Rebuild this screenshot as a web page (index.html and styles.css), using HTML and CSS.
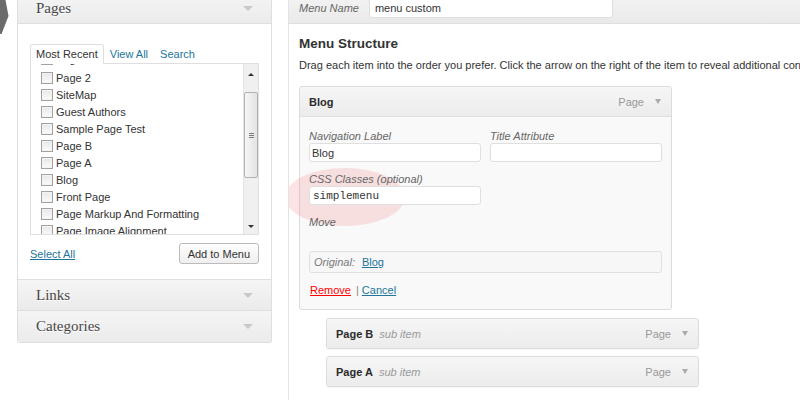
FILE: index.html
```html
<!DOCTYPE html>
<html lang="en">
<head>
<meta charset="utf-8">
<title>Menus</title>
<link rel="stylesheet" href="styles.css">
</head>
<body>
<svg class="pointer" width="10" height="40" viewBox="0 0 10 40"><polygon points="0,0 5.5,0 8.5,16 1.5,34 0,34" fill="#6b6b6b"/></svg>
<div class="page">
  <aside class="side">
    <div class="panel">
      <div class="acc-head"><h3 class="acc-title">Pages</h3><span class="acc-arrow"></span></div>
      <div class="acc-body">
        <div class="tabs">
          <span class="tab active">Most Recent</span>
          <a class="tab">View All</a>
          <a class="tab">Search</a>
        </div>
        <div class="checklist">
          <ul class="items">
            <li class="peek"><span class="cb"></span>Page with comments</li>
            <li><span class="cb"></span>Page 2</li>
            <li><span class="cb"></span>SiteMap</li>
            <li><span class="cb"></span>Guest Authors</li>
            <li><span class="cb"></span>Sample Page Test</li>
            <li><span class="cb"></span>Page B</li>
            <li><span class="cb"></span>Page A</li>
            <li><span class="cb"></span>Blog</li>
            <li><span class="cb"></span>Front Page</li>
            <li><span class="cb"></span>Page Markup And Formatting</li>
            <li><span class="cb"></span>Page Image Alignment</li>
          </ul>
          <div class="sb">
            <div class="sb-btn"><span class="up"></span></div>
            <div class="sb-track"><div class="thumb"><span class="grip"></span></div></div>
            <div class="sb-btn"><span class="down"></span></div>
          </div>
        </div>
        <div class="actions"><a class="select-all">Select All</a><button class="btn">Add to Menu</button></div>
      </div>
      <div class="acc-head"><h3 class="acc-title">Links</h3><span class="acc-arrow"></span></div>
      <div class="acc-head last"><h3 class="acc-title">Categories</h3><span class="acc-arrow"></span></div>
    </div>
  </aside>
  <main class="edit">
    <div class="edit-head"><label class="name-label">Menu Name</label><input class="name-input" type="text" value="menu custom"></div>
    <div class="edit-body">
      <h2 class="structure">Menu Structure</h2>
      <p class="hint">Drag each item into the order you prefer. Click the arrow on the right of the item to reveal additional configuration options.</p>
      <div class="menu">
        <div class="item open">
          <div class="item-bar"><span class="item-title">Blog</span><span class="item-type">Page</span><span class="caret"></span></div>
          <div class="item-settings">
            <span class="spot"></span>
            <div class="row">
              <div class="field"><span class="label">Navigation Label</span><input class="field-input" type="text" value="Blog"></div>
              <div class="field"><span class="label">Title Attribute</span><input class="field-input" type="text" value=""></div>
            </div>
            <div class="row">
              <div class="field"><span class="label">CSS Classes (optional)</span><input class="field-input mono" type="text" value="simplemenu"></div>
            </div>
            <div class="label move">Move</div>
            <div class="original"><span class="orig-label">Original:</span><a class="link">Blog</a></div>
            <div class="item-actions"><a class="remove">Remove</a><span class="sep">|</span><a class="link">Cancel</a></div>
          </div>
        </div>
        <div class="item sub">
          <div class="item-bar"><span class="item-title">Page B</span><span class="sub-note">sub item</span><span class="item-type">Page</span><span class="caret"></span></div>
        </div>
        <div class="item sub">
          <div class="item-bar"><span class="item-title">Page A</span><span class="sub-note">sub item</span><span class="item-type">Page</span><span class="caret"></span></div>
        </div>
      </div>
    </div>
  </main>
</div>
</body>
</html>
```

FILE: styles.css
```css
* { box-sizing: border-box; }
html, body { margin: 0; background: #fff; }
body {
  font-family: "Liberation Sans", Arial, sans-serif;
  font-size: 11px;
  color: #333;
  width: 800px;
  height: 400px;
  overflow: hidden;
  position: relative;
}
.pointer { position: absolute; left: 0; top: 0; z-index: 5; }

.page { display: flex; margin-top: -7px; height: 407px; }

/* left column */
.side { flex: none; width: 289px; border-right: 1px solid #e3e3e3; padding-left: 17px; }
.panel {
  width: 255px;
  border: 1px solid #dfdfdf;
  border-top: 0;
  border-radius: 0 0 3px 3px;
  overflow: hidden;
}
.acc-head {
  height: 31px;
  display: flex;
  align-items: center;
  justify-content: space-between;
  padding: 0 18px 0 18px;
  border-bottom: 1px solid #dfdfdf;
  background: linear-gradient(#f5f5f5, #ebebeb);
}
.acc-head.last { border-bottom: 0; }
.acc-title { margin: 0; font: 15px "Liberation Serif", "Times New Roman", serif; color: #464646; text-shadow: 0 1px 0 #fff; }
.acc-arrow { width: 0; height: 0; border-left: 5px solid transparent; border-right: 5px solid transparent; border-top: 5px solid #c9c9c9; }

.acc-body { background: #fff; padding: 20px 12px 15px; border-bottom: 1px solid #dfdfdf; }
.tabs { display: flex; height: 19px; }
.tab {
  font-size: 11px;
  line-height: 18px;
  padding: 0 5px;
  color: #21759b;
  text-decoration: none;
  border: 1px solid transparent;
  border-bottom: 0;
}
.tab.active {
  color: #333;
  background: #fff;
  border-color: #dfdfdf;
  border-radius: 3px 3px 0 0;
  height: 20px;
  position: relative;
  z-index: 1;
}
.checklist { display: flex; height: 172px; border: 1px solid #dfdfdf; background: #fff; overflow: hidden; }
.items { flex: 1; list-style: none; margin: -14px 0 0; padding: 0 0 0 10px; overflow: hidden; }
.items li { height: 17px; display: flex; align-items: center; gap: 3px; white-space: nowrap; color: #333; }
.items li.peek { margin-bottom: 2px; }
.cb {
  flex: none;
  width: 12px;
  height: 12px;
  border: 1px solid #a2a2a2;
  background: linear-gradient(#e8e8e8, #fbfbfb);
  box-shadow: inset 0 0 0 1px #f3f3f3;
}
.sb { flex: none; width: 15px; display: flex; flex-direction: column; background: #f0f0f0; border-left: 1px solid #e6e6e6; }
.sb-btn { height: 17px; display: flex; align-items: center; justify-content: center; }
.sb-btn:first-child { padding-top: 3px; }
.sb-btn:last-child { padding-top: 2px; }
.up { width: 0; height: 0; border-left: 3px solid transparent; border-right: 3px solid transparent; border-bottom: 3px solid #333; }
.down { width: 0; height: 0; border-left: 3px solid transparent; border-right: 3px solid transparent; border-top: 3px solid #333; }
.sb-track { flex: 1; padding-top: 11px; }
.thumb {
  height: 86px;
  border: 1px solid #b1b1b1;
  border-radius: 2px;
  background: linear-gradient(90deg, #f6f6f6, #e3e3e3);
  display: flex;
  align-items: center;
  justify-content: center;
}
.grip { width: 5px; height: 5px; background: repeating-linear-gradient(#7a7a7a 0 1px, transparent 1px 2px); }

.actions { display: flex; justify-content: space-between; align-items: center; margin-top: 8px; }
.select-all { font-size: 11px; color: #21759b; text-decoration: underline; }
.btn {
  font: 11px "Liberation Sans", Arial, sans-serif;
  color: #333;
  height: 21px;
  padding: 0 8px;
  border: 1px solid #bbb;
  border-radius: 3px;
  background: linear-gradient(#fefefe, #efefef);
}

/* right column */
.edit { flex: 1; min-width: 0; overflow: hidden; }
.edit-head {
  height: 31px;
  border-bottom: 1px solid #dfdfdf;
  background: linear-gradient(#f4f4f4, #eaeaea);
  display: flex;
  align-items: center;
  padding-left: 10px;
  gap: 10px;
}
.name-label { font-style: italic; color: #666; }
.name-input {
  width: 244px;
  height: 20px;
  border: 1px solid #dfdfdf;
  border-radius: 3px;
  background: #fff;
  padding: 0 5px;
  font: 11px "Liberation Sans", Arial, sans-serif;
  color: #333;
  outline: none;
}
.edit-body { padding: 0 10px; }
.structure { margin: 11px 0 0; font: bold 13.5px/17px "Liberation Sans", Arial, sans-serif; color: #333; }
.hint { margin: 6px 0 0; line-height: 14px; white-space: nowrap; color: #333; }

.menu { margin-top: 14px; display: flex; flex-direction: column; }
.item {
  width: 373px;
  border: 1px solid #dcdcdc;
  border-radius: 3px;
  background: #f9f9f9;
}
.item.open { margin-bottom: 1px; }
.item + .item { margin-top: 7px; }
.sub { margin-left: 27px; box-shadow: 0 1px 1px rgba(0,0,0,0.04); }
.item-bar {
  height: 29px;
  display: flex;
  align-items: center;
  padding: 0 10px 0 9px;
  background: linear-gradient(#f6f6f6, #ececec);
  border-radius: 3px;
}
.open .item-bar { height: 30px; border-bottom: 1px solid #dfdfdf; border-radius: 3px 3px 0 0; }
.item-title { font-weight: bold; color: #2a2a2a; }
.sub-note { font-style: italic; color: #999; margin-left: 6px; }
.item-type { margin-left: auto; color: #999; }
.caret { margin-left: 11px; width: 0; height: 0; border-left: 3.5px solid transparent; border-right: 3.5px solid transparent; border-top: 5px solid #aaa; }

.item-settings { position: relative; padding: 12px 9px 12px; }
.spot {
  position: absolute;
  left: -15px;
  top: 51px;
  width: 120px;
  height: 58px;
  border-radius: 50%;
  background: rgba(240, 110, 110, 0.19);
}
.row { display: flex; gap: 9px; }
.row + .row { margin-top: 10px; }
.field { width: 172px; display: flex; flex-direction: column; position: relative; }
.label { font-style: italic; color: #666; line-height: 14px; }
.field-input {
  position: relative;
  z-index: 1;
  width: 172px;
  height: 19px;
  border: 1px solid #dfdfdf;
  border-radius: 3px;
  background: #fff;
  padding: 0 2px;
  font: 11px "Liberation Sans", Arial, sans-serif;
  color: #333;
  outline: none;
}
.field-input.mono { font-family: "Liberation Mono", "Courier New", monospace; padding: 0 3px; }
.move { margin-top: 10px; position: relative; }
.original {
  margin-top: 22px;
  height: 22px;
  border: 1px solid #e0e0e0;
  border-radius: 3px;
  background: #f7f7f7;
  display: flex;
  align-items: center;
  padding-left: 4px;
  gap: 7px;
}
.orig-label { font-style: italic; color: #777; }
.link { color: #21759b; text-decoration: underline; }
.item-actions { margin-top: 10px; line-height: 14px; padding-left: 1px; }
.remove { color: #f00; text-decoration: underline; }
.sep { color: #888; margin: 0 3px 0 5px; }
```
